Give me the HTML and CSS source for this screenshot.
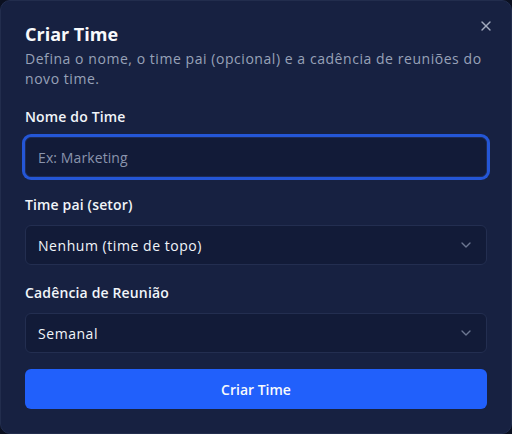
FILE: index.html
```html
<!DOCTYPE html>
<html lang="pt-BR">
<head>
<meta charset="utf-8">
<title>Criar Time</title>
<link rel="stylesheet" href="styles.css">
</head>
<body>
<div class="dialog">
  <button class="close" aria-label="Fechar">
    <svg width="16" height="16" viewBox="0 0 24 24" fill="none" stroke="currentColor" stroke-width="2" stroke-linecap="round" stroke-linejoin="round"><path d="M18 6 6 18"/><path d="m6 6 12 12"/></svg>
  </button>
  <div class="header">
    <h2 class="title">Criar Time</h2>
    <p class="desc">Defina o nome, o time pai (opcional) e a cadência de reuniões do novo time.</p>
  </div>
  <form class="form">
    <div class="field">
      <label class="label">Nome do Time</label>
      <div class="input focused"><span class="placeholder">Ex: Marketing</span></div>
    </div>
    <div class="field">
      <label class="label">Time pai (setor)</label>
      <div class="input select"><span class="value">Nenhum (time de topo)</span>
        <svg class="chev" width="16" height="16" viewBox="0 0 24 24" fill="none" stroke="currentColor" stroke-width="2" stroke-linecap="round" stroke-linejoin="round"><path d="m6 9 6 6 6-6"/></svg>
      </div>
    </div>
    <div class="field">
      <label class="label">Cadência de Reunião</label>
      <div class="input select"><span class="value">Semanal</span>
        <svg class="chev" width="16" height="16" viewBox="0 0 24 24" fill="none" stroke="currentColor" stroke-width="2" stroke-linecap="round" stroke-linejoin="round"><path d="m6 9 6 6 6-6"/></svg>
      </div>
    </div>
    <button type="button" class="submit">Criar Time</button>
  </form>
</div>
</body>
</html>
```
FILE: styles.css
```css
* { box-sizing: border-box; }
html, body { margin: 0; padding: 0; }
body {
  background: #0b1020;
  width: 512px;
  height: 434px;
  font-family: "Open Sans", "Noto Sans", sans-serif;
  color: #f1f5f9;
  overflow: hidden;
}
.dialog {
  position: relative;
  width: 512px;
  height: 434px;
  background: #172141;
  border: 1px solid #222d4d;
  border-radius: 10px;
  padding: 24px;
}
.close {
  position: absolute;
  top: 17px;
  right: 17px;
  width: 16px;
  height: 16px;
  padding: 0;
  border: 0;
  background: none;
  color: #a3abbf;
  display: flex;
}
.header {
  display: flex;
  flex-direction: column;
  gap: 6px;
}
.title {
  margin: 0;
  font-size: 18px;
  line-height: 18px;
  font-weight: 700;
  color: #f8fafc;
}
.desc {
  margin: 0;
  font-size: 14px;
  line-height: 20px;
  letter-spacing: 0.55px;
  color: #97a1b8;
}
.form {
  margin-top: 18px;
  display: flex;
  flex-direction: column;
  gap: 18px;
}
.field {
  display: flex;
  flex-direction: column;
  gap: 10px;
}
.label {
  font-size: 14px;
  line-height: 20px;
  font-weight: 600;
  letter-spacing: 0.15px;
  color: #f1f5f9;
}
.input {
  height: 40px;
  border: 1px solid #232e50;
  border-radius: 6px;
  background: #121b38;
  padding: 0 12px;
  display: flex;
  align-items: center;
  font-size: 14px;
}
.input.focused {
  border-color: #1d2b55;
  box-shadow: 0 0 0 3px #2456d6;
}
.placeholder { color: #8a94ad; letter-spacing: 0.1px; }
.select { justify-content: space-between; }
.value { color: #f1f5f9; font-weight: 500; letter-spacing: 0.55px; }
.chev { color: #6d7792; }
.submit {
  margin-top: -2px;
  height: 40px;
  border: 0;
  border-radius: 6px;
  background: #2160fb;
  color: #f8fafc;
  font-family: inherit;
  font-size: 14px;
  font-weight: 600;
}
```
